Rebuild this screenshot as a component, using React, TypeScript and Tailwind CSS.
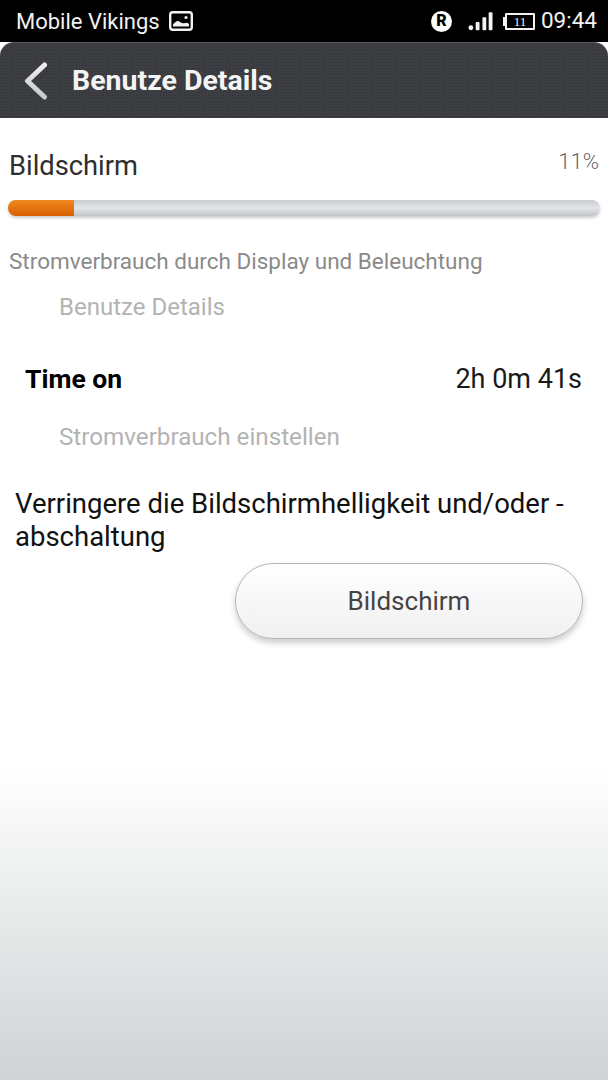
import { FC } from "react";

const StatusBar: FC = () => (
  <div className="flex h-[42px] items-center justify-between bg-black pl-4 pr-[11px] text-[22px] text-[#f2f2f2]">
    <div className="flex items-center gap-[9px]">
      <span>Mobile Vikings</span>
      {/* picture notification */}
      <svg width="24" height="20" viewBox="0 0 24 20">
        <rect x="1.2" y="1.2" width="21.6" height="17.6" rx="2.5" fill="none" stroke="#f2f2f2" strokeWidth="2.4" />
        <path d="M4 15.5 L4 13.5 Q8 8 11 11 Q14 13 16 12 Q18 11 20 13 L20 15.5 Z" fill="#f2f2f2" />
        <circle cx="17" cy="6.5" r="1.6" fill="#f2f2f2" />
      </svg>
    </div>
    <div className="flex items-center">
      <div className="mr-[16px] flex h-[21px] w-[21px] items-center justify-center rounded-full bg-white text-[16px] font-black leading-none text-black">
        R
      </div>
      <svg width="25" height="20" viewBox="0 0 26 20" className="mr-[10px]">
        <circle cx="3" cy="17" r="2.5" fill="#f2f2f2" />
        <rect x="8" y="11" width="4" height="8.5" rx="1" fill="#f2f2f2" />
        <rect x="15" y="6" width="4" height="13.5" rx="1" fill="#f2f2f2" />
        <rect x="21.5" y="1" width="4" height="18.5" rx="1" fill="#f2f2f2" />
      </svg>
      <div className="mr-[6px] flex items-center">
        <div className="h-[9px] w-[2px] bg-[#f2f2f2]" />
        <div className="flex h-[17px] w-[30px] items-center justify-center rounded-[1px] border-2 border-[#f2f2f2] font-['Liberation_Serif',serif] text-[13px] leading-none">
          11
        </div>
      </div>
      <span className="text-[22.5px]">09:44</span>
    </div>
  </div>
);

const App: FC = () => {
  return (
    <div className="flex h-[1080px] w-[608px] flex-col overflow-hidden bg-gradient-to-b from-white from-[71%] to-[#cfd3d4] font-['Roboto',sans-serif]">
      <StatusBar />

      {/* Title bar */}
      <div className="flex h-[76px] items-center rounded-t-[14px] border-t border-[#55585e] bg-[#3c3e44] bg-[radial-gradient(rgba(0,0,0,0.2)_1px,transparent_1px)] bg-[length:3px_3px] pl-[24px]">
        <svg width="26" height="38" viewBox="0 0 26 38" fill="none">
          <defs>
            <linearGradient id="backArrow" x1="0" y1="0" x2="0" y2="38" gradientUnits="userSpaceOnUse">
              <stop offset="0" stopColor="#f2f2f2" />
              <stop offset="1" stopColor="#c4c6c8" />
            </linearGradient>
          </defs>
          <path d="M20.5 3 L3.5 19 L20.5 35" stroke="url(#backArrow)" strokeWidth="5" strokeLinecap="round" strokeLinejoin="round" />
        </svg>
        <span className="ml-[22px] pt-[2px] text-[28.5px] font-bold text-[#f4f4f4]">Benutze Details</span>
      </div>

      <div className="flex flex-col">
        {/* Battery usage */}
        <div className="flex items-start justify-between px-[9px] pt-[31px]">
          <span className="text-[27.3px] leading-[34px] text-[#2e2e2e]">Bildschirm</span>
          <span className="text-[22px] font-light leading-[26px] text-[#666666]">11%</span>
        </div>
        <div className="mx-[8px] mt-[17px] h-[16px] overflow-hidden rounded-full bg-gradient-to-b from-[#c8ccd0] via-[#e2e5e8] to-[#c0c4c8] shadow-[0_2px_3px_rgba(0,0,0,0.2)]">
          <div className="h-full w-[66px] bg-gradient-to-b from-[#f08a1d] to-[#d95f00]" />
        </div>
        <p className="mt-[31px] pl-[9px] text-[22.5px] leading-[28px] text-[#8a8a8a]">
          Stromverbrauch durch Display und Beleuchtung
        </p>
        <p className="mt-[18px] pl-[59px] text-[24px] leading-[28px] text-[#b3b3b3]">Benutze Details</p>

        <div className="mt-[42px] flex items-center justify-between pl-[25px] pr-[26px]">
          <span className="text-[26.5px] font-bold leading-[32px] text-black">Time on</span>
          <span className="text-[27px] leading-[32px] text-[#1a1a1a]">2h 0m 41s</span>
        </div>

        <p className="mt-[28px] pl-[59px] text-[24.2px] leading-[28px] text-[#b3b3b3]">Stromverbrauch einstellen</p>

        <p className="mt-[36px] pl-[15px] pr-[30px] text-[27.5px] leading-[33px] text-[#111111]">
          Verringere die Bildschirmhelligkeit und/oder -abschaltung
        </p>

        <div className="mt-[10px] flex justify-end pr-[25px]">
          <button className="h-[76px] w-[348px] rounded-full border border-[#b5b5b5] bg-gradient-to-b from-white to-[#f0f0f0] text-[26px] text-[#444444] shadow-[0_4px_6px_rgba(0,0,0,0.2)]">
            Bildschirm
          </button>
        </div>
      </div>
    </div>
  );
};

export default App;
